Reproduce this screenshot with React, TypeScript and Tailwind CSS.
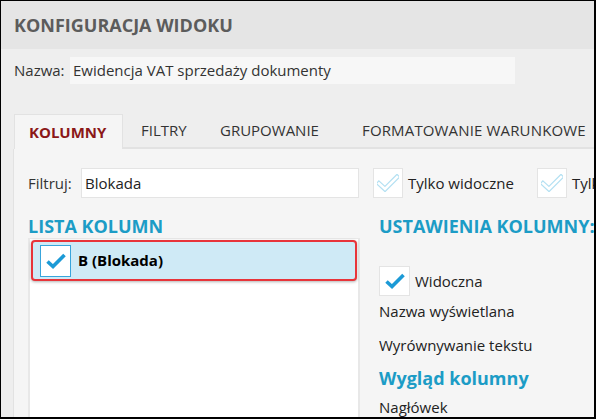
import React from "react";

function LightCheck() {
  return (
    <svg width="22" height="18" viewBox="0 0 22 18">
      <path d="M2 9.5 L8 15 L20 3" fill="none" stroke="#b3e0f2" strokeWidth="5" strokeLinejoin="miter" strokeLinecap="square" />
      <path d="M2 9.5 L8 15 L20 3" fill="none" stroke="#ffffff" strokeWidth="2.6" strokeLinejoin="miter" strokeLinecap="square" />
    </svg>
  );
}

function BlueCheck() {
  return (
    <svg width="22" height="18" viewBox="0 0 22 18">
      <path d="M2.5 9.5 L8 14.5 L19.5 3" fill="none" stroke="#1c9ad6" strokeWidth="3.6" strokeLinejoin="miter" strokeLinecap="butt" />
    </svg>
  );
}

export default function App() {
  return (
    <div className="w-[596px] h-[419px] overflow-hidden border-black border-t border-l border-r-2 border-b-2 bg-[#eeeeee] font-['Open_Sans',sans-serif] text-[#222]">
      {/* header */}
      <div className="h-[48px] bg-[#e5e5e5] flex items-center pl-[13px]">
        <span className="text-[18px] font-bold text-[#5c5c5c]">KONFIGURACJA WIDOKU</span>
      </div>
      {/* name row */}
      <div className="mt-[8px] flex items-center pl-[13px] h-[27px]">
        <span className="w-[56px] text-[15px] text-[#333] whitespace-nowrap">Nazwa:</span>
        <div className="w-[445px] h-[27px] bg-[#f7f7f7] flex items-center pl-[3px] text-[15px] text-[#333] whitespace-nowrap">
          Ewidencja VAT sprzedaży dokumenty
        </div>
      </div>
      {/* tabs */}
      <div className="mt-[30px] pl-[13px] flex h-[35px] text-[15px] whitespace-nowrap">
        <div className="w-[109px] shrink-0 pl-[14px] flex items-center bg-[#f5f5f5] border-t border-l border-r border-[#e2e2e2] font-bold text-[#8b1818]">KOLUMNY</div>
        <div className="w-[80px] shrink-0 pl-[18px] flex items-center text-[#333] border-b-2 border-[#e2e2e2]">FILTRY</div>
        <div className="w-[142px] shrink-0 pl-[17px] flex items-center text-[#333] border-b-2 border-[#e2e2e2]">GRUPOWANIE</div>
        <div className="flex-1 pl-[17px] flex items-center text-[#333] tracking-[0.15px] border-b-2 border-[#e2e2e2]">FORMATOWANIE WARUNKOWE</div>
      </div>
      {/* content */}
      <div className="flex h-[300px]">
        <div className="w-[13px] shrink-0 border-r border-[#e2e2e2]" />
        <div className="flex-1 min-w-0 bg-[#f5f5f5] pl-[14px] pt-[19px]">
          {/* filter row */}
          <div className="flex items-center h-[30px] whitespace-nowrap">
            <span className="w-[53px] shrink-0 text-[15px] text-[#333]">Filtruj:</span>
            <div className="w-[278px] shrink-0 h-[30px] bg-white border border-[#e4e4e4] flex items-center pl-[3px] text-[15px] text-[#222]">Blokada</div>
            <div className="ml-[14px] w-[30px] h-[30px] bg-white border border-[#e4e4e4] flex items-center justify-center shrink-0"><LightCheck /></div>
            <span className="ml-[5px] w-[129px] shrink-0 text-[15px] text-[#222]">Tylko widoczne</span>
            <div className="w-[30px] h-[30px] bg-white border border-[#e4e4e4] flex items-center justify-center shrink-0"><LightCheck /></div>
            <span className="ml-[5px] text-[15px] text-[#222]">Tylko zaznaczone</span>
          </div>
          <div className="flex mt-[17px]">
            {/* left list */}
            <div className="w-[332px] shrink-0">
              <div className="text-[18px] font-bold text-[#1c9cc6] leading-[22px] whitespace-nowrap">LISTA KOLUMN</div>
              <div className="mt-[1px] h-[200px] bg-white border-l-2 border-r-2 border-t border-[#e8e8e8] p-[1px]">
                <div className="h-[41px] rounded-[4px] border-2 border-[#e8343a] bg-[#cfeaf6] shadow-[0_1px_3px_rgba(0,0,0,0.3)] flex items-center pl-[7px]">
                  <div className="w-[31px] h-[32px] bg-white border-[1.5px] border-[#38a5dc] flex items-center justify-center"><BlueCheck /></div>
                  <span className="ml-[7px] text-[15px] font-bold text-black">B (Blokada)</span>
                </div>
              </div>
            </div>
            {/* right settings */}
            <div className="ml-[19px] whitespace-nowrap">
              <div className="text-[18px] font-bold text-[#1c9cc6] leading-[22px]">USTAWIENIA KOLUMNY:</div>
              <div className="mt-[29px] flex items-center">
                <div className="w-[31px] h-[30px] bg-white border border-[#e4e4e4] flex items-center justify-center"><BlueCheck /></div>
                <span className="ml-[5px] text-[15px] text-[#222]">Widoczna</span>
              </div>
              <div className="mt-[4px] text-[15px] text-[#222] leading-[22px]">Nazwa wyświetlana</div>
              <div className="mt-[12px] text-[15px] text-[#222] leading-[22px]">Wyrównywanie tekstu</div>
              <div className="mt-[10px] text-[18px] font-bold text-[#1c9cc6] leading-[24px]">Wygląd kolumny</div>
              <div className="mt-[6px] text-[15px] text-[#222] leading-[22px]">Nagłówek</div>
            </div>
          </div>
        </div>
      </div>
    </div>
  );
}
